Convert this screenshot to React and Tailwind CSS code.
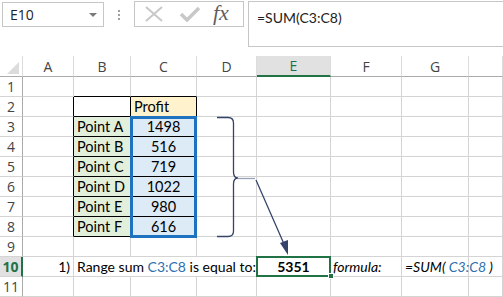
import React from "react";

const COLS = ["A", "B", "C", "D", "E", "F", "G", ""];

const TABLE = [
  ["Point A", "1498"],
  ["Point B", "516"],
  ["Point C", "719"],
  ["Point D", "1022"],
  ["Point E", "980"],
  ["Point F", "616"],
];

const cellFont = { fontFamily: "Lato, 'Liberation Sans', sans-serif" };

function Toolbar() {
  return (
    <div className="relative h-[56px] bg-white">
      {/* name box */}
      <div className="absolute left-[2px] top-[2px] w-[102px] h-[25px] border border-[#c6c6c6] flex items-center pl-[7px] pr-[6px]">
        <span className="text-[14px] text-[#222]" style={{ fontFamily: "'Open Sans', 'Noto Sans', sans-serif" }}>E10</span>
        <span className="ml-auto w-0 h-0 border-l-[4px] border-r-[4px] border-t-[4px] border-l-transparent border-r-transparent border-t-[#7a7a7a]" />
      </div>
      {/* dots */}
      <div className="absolute left-[118px] top-[10px] flex flex-col gap-[2px]">
        <span className="w-[2px] h-[2px] bg-[#a0a0a0]" />
        <span className="w-[2px] h-[2px] bg-[#a0a0a0]" />
        <span className="w-[2px] h-[2px] bg-[#a0a0a0]" />
      </div>
      {/* buttons */}
      <div className="absolute left-[134px] top-[1px] w-[110px] h-[26px] border border-[#c6c6c6] flex items-center">
        <svg width="22" height="16" viewBox="0 0 22 16" className="ml-[8px]">
          <path d="M3 1 L19 15 M19 1 L3 15" stroke="#c8c8c8" strokeWidth="2" fill="none" />
        </svg>
        <svg width="22" height="16" viewBox="0 0 22 16" className="ml-[14px]">
          <path d="M2 8 L8 14 L20 2" stroke="#c8c8c8" strokeWidth="3.5" fill="none" />
        </svg>
        <span className="ml-[12px] mt-[-2px] text-[22px] italic text-[#5f5f5f] leading-none" style={{ fontFamily: "'Liberation Serif', 'DejaVu Serif', serif" }}>fx</span>
      </div>
      {/* formula input */}
      <div className="absolute left-[248px] top-[1px] right-0 h-[46px] border-l border-t border-b border-[#c6c6c6] pl-[8px] pt-[3px]">
        <span className="text-[14px] text-[#222]" style={cellFont}>=SUM(C3:C8)</span>
      </div>
    </div>
  );
}

function HeaderRow() {
  return (
    <>
      <div className="h-[21px] border-r border-b border-r-[#dcdcdc] border-b-[#ababab] flex items-end justify-end pr-[3px] pb-[2px]">
        <svg width="12" height="12" viewBox="0 0 12 12">
          <path d="M12 0 L12 12 L0 12 Z" fill="#dcdcdc" />
        </svg>
      </div>
      {COLS.map((c, i) => (
        <div
          key={i}
          className={
            "h-[21px] flex items-center justify-center text-[14px] border-r border-r-[#dcdcdc] " +
            (c === "E"
              ? "bg-[#e1e1e1] text-[#217346] border-b-2 border-b-[#217346]"
              : "text-[#444] border-b border-b-[#ababab]")
          }
          style={{ fontFamily: "'Open Sans', 'Noto Sans', sans-serif" }}
        >
          {c}
        </div>
      ))}
    </>
  );
}

function RowHead({ n }) {
  const active = n === 10;
  return (
    <div
      className={
        "h-[20px] flex items-center justify-center text-[14px] border-b border-b-[#d4d4d4] " +
        (active
          ? "bg-[#e1e1e1] text-[#217346] font-bold border-r-2 border-r-[#217346]"
          : "text-[#444] border-r border-r-[#ababab]")
      }
      style={{ fontFamily: "'Open Sans', 'Noto Sans', sans-serif" }}
    >
      {n}
    </div>
  );
}

function Cell({ children, className = "", small, right = "#d4d4d4", bottom = "#d4d4d4", bg = "transparent", span }) {
  return (
    <div
      className={
        "h-[20px] flex items-center text-black whitespace-nowrap border-r border-b " +
        (small ? "text-[14px] " : "text-[14.5px] ") +
        className
      }
      style={{ ...cellFont, borderRightColor: right, borderBottomColor: bottom, backgroundColor: bg, gridColumn: span }}
    >
      {children}
    </div>
  );
}

function EmptyRest({ from }) {
  return COLS.slice(from).map((_, i) => <Cell key={i} />);
}

export default function App() {
  return (
    <div className="relative w-[503px] h-[297px] overflow-hidden bg-white">
      <Toolbar />
      <div className="grid grid-cols-[23px_51px_57px_66px_60px_74px_71px_67px_1fr]">
        <HeaderRow />

        {/* row 1 */}
        <RowHead n={1} />
        <Cell />
        <Cell bottom="#000" />
        <Cell bottom="#000" />
        <EmptyRest from={3} />

        {/* row 2 */}
        <RowHead n={2} />
        <Cell right="#000" />
        <Cell right="#000" bottom="#000" />
        <Cell right="#000" bottom="#000" bg="#fff2cc" className="pl-[3px]">Profit</Cell>
        <EmptyRest from={3} />

        {TABLE.map(([name, val], i) => (
          <React.Fragment key={name}>
            <RowHead n={i + 3} />
            <Cell right="#000" />
            <Cell right="#000" bottom="#000" bg="#e2efda" className="pl-[3px]">{name}</Cell>
            <Cell right="#000" bottom="#000" bg="#ddebf7" className="justify-center">{val}</Cell>
            <EmptyRest from={3} />
          </React.Fragment>
        ))}

        {/* row 9 */}
        <RowHead n={9} />
        <EmptyRest from={0} />

        {/* row 10 */}
        <RowHead n={10} />
        <Cell small className="justify-end pr-[3px]">1)</Cell>
        <Cell small span="span 3" className="pl-[3px]">
          Range sum&nbsp;<span className="text-[#2e6fb0]">C3:C8</span>&nbsp;is equal to:
        </Cell>
        <Cell small className="justify-center font-bold">5351</Cell>
        <Cell small className="pl-[2px] italic">formula:</Cell>
        <Cell small className="pl-[3px] italic">
          =SUM(&nbsp;<span className="text-[#2e6fb0]">C3:C8</span>&nbsp;)
        </Cell>
        <Cell />

        {/* row 11 */}
        <RowHead n={11} />
        <EmptyRest from={0} />
      </div>

      {/* C3:C8 outline */}
      <div className="absolute left-[130px] top-[116px] w-[67px] h-[122px] border-[3px] border-[#1f72c0] pointer-events-none" />

      {/* active cell E10 */}
      <div className="absolute left-[256px] top-[256px] w-[75px] h-[21px] border-2 border-[#217346] pointer-events-none" />
      <div className="absolute left-[328px] top-[273px] w-[6px] h-[6px] bg-[#217346] border border-white pointer-events-none" />

      {/* brace and arrow */}
      <svg className="absolute left-0 top-0 pointer-events-none" width="503" height="297" viewBox="0 0 503 297">
        <path
          d="M217 117.5 L228 117.5 Q233.5 117.5 233.5 123 L233.5 172 Q233.5 178 238 178 Q233.5 178 233.5 184 L233.5 231 Q233.5 236.5 228 236.5 L217 236.5"
          stroke="#34436a"
          strokeWidth="1.3"
          fill="none"
        />
        <path d="M238 178.5 L255 178.5" stroke="#9aa3b8" strokeWidth="1.3" />
        <path d="M256 180 L284 244" stroke="#34436a" strokeWidth="1.3" />
        <path d="M288 255 L280 243 L288 240 Z" fill="#34436a" />
      </svg>
    </div>
  );
}
